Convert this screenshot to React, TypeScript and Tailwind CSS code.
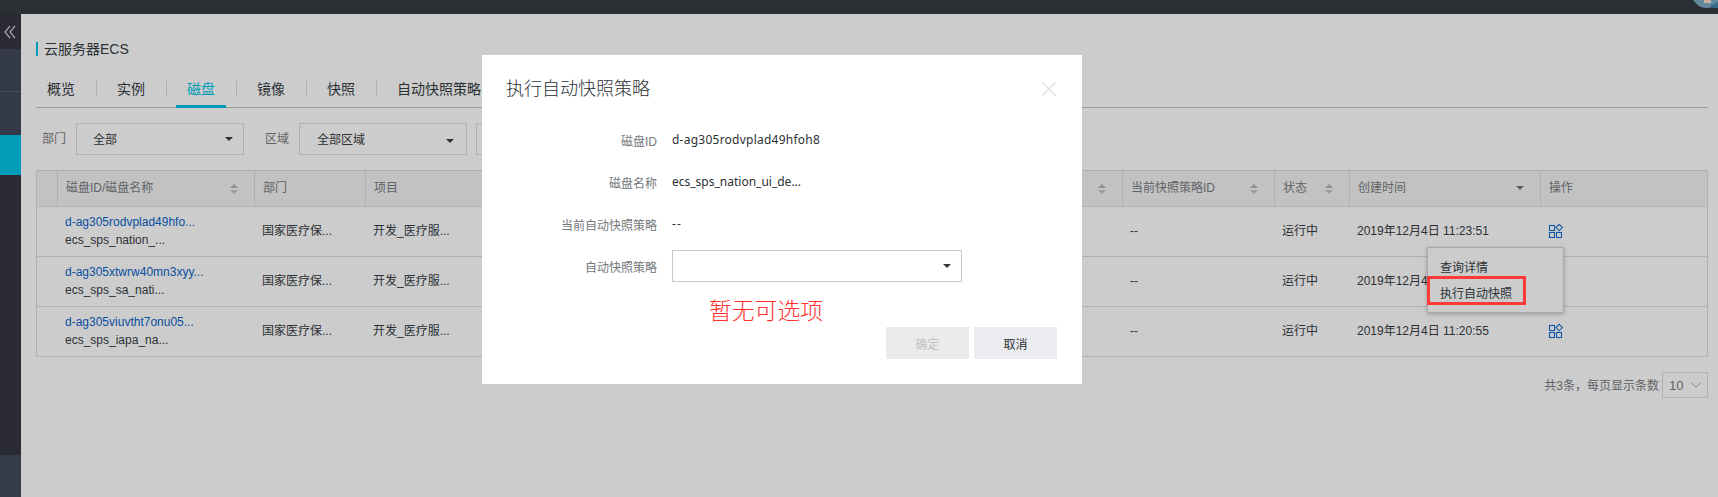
import React from "react";

const CARET = "h-0 w-0 border-x-4 border-t-4 border-x-transparent";
const COLS =
  "grid grid-cols-[21px_197px_111px_117px_640px_152px_75px_191px_1fr]";

const tabs = ["概览", "实例", "磁盘", "镜像", "快照", "自动快照策略"];

const headers: { label: string; sort?: "both" | "down" }[] = [
  { label: "" },
  { label: "磁盘ID/磁盘名称", sort: "both" },
  { label: "部门" },
  { label: "项目" },
  { label: "", sort: "both" },
  { label: "当前快照策略ID", sort: "both" },
  { label: "状态", sort: "both" },
  { label: "创建时间", sort: "down" },
  { label: "操作" },
];

const rows = [
  { id: "d-ag305rodvplad49hfo...", name: "ecs_sps_nation_...", time: "2019年12月4日 11:23:51" },
  { id: "d-ag305xtwrw40mn3xyy...", name: "ecs_sps_sa_nati...", time: "2019年12月4日 11:21:47" },
  { id: "d-ag305viuvtht7onu05...", name: "ecs_sps_iapa_na...", time: "2019年12月4日 11:20:55" },
];

function Sort({ kind }: { kind: "both" | "down" }) {
  if (kind === "down") return <span className={CARET + " mb-px mr-4 border-t-[#5b5e63]"} />;
  return (
    <span className="mr-4 flex flex-col gap-[2px]">
      <span className="h-0 w-0 border-x-4 border-b-4 border-x-transparent border-b-[#8f9194]" />
      <span className={CARET + " border-t-[#9b9da0]"} />
    </span>
  );
}

function GridIcon() {
  return (
    <svg width="16" height="16" viewBox="0 0 16 16" fill="none" stroke="#1459a8" strokeWidth="1.1">
      <rect x="1.5" y="2.5" width="5" height="5" />
      <rect x="1.5" y="9.5" width="5" height="5" />
      <rect x="8.5" y="9.5" width="5" height="5" />
      <path d="M11.2 1.4 14.4 4.6 11.2 7.8 8 4.6Z" />
    </svg>
  );
}

function Sidebar() {
  return (
    <aside className="flex w-[21px] shrink-0 flex-col bg-[#292a36]">
      <div className="flex h-[35px] items-center pl-1">
        <svg width="12" height="14" viewBox="0 0 12 14" fill="none" stroke="#a3a5ab" strokeWidth="1.2">
          <path d="M6 1 1 7l5 6M11 1 6 7l5 6" />
        </svg>
      </div>
      <div className="h-[43px] border-b border-[#484d5a] bg-[#343a48]" />
      <div className="h-[43px] bg-[#343a48]" />
      <div className="h-10 bg-[#009cb8]" />
      <div className="mt-auto h-[42px] bg-[#343b49]" />
    </aside>
  );
}

function Filter({ label, children }: { label: string; children: React.ReactNode }) {
  return (
    <div className="flex items-center gap-[10px]">
      <span className="text-[#5f6266]">{label}</span>
      <div className="flex h-8 w-[168px] items-center justify-between border border-[#b0b0b0]">{children}</div>
    </div>
  );
}

function DiskTable() {
  return (
    <div className="mt-[15px] w-[1672px] border border-b-0 border-[#b0b0b0]">
      <div className={COLS + " h-9 border-b border-[#b0b0b0] bg-[#c2c2c2] text-[#5f6266]"}>
        {headers.map((h, i) => (
          <div
            key={i}
            className={
              "flex items-center justify-between pl-2 " +
              (i === 3 || i === 8 ? "" : "border-r border-[#b0b0b0]")
            }
          >
            <span className="pb-px">{h.label}</span>
            {h.sort && <Sort kind={h.sort} />}
          </div>
        ))}
      </div>
      {rows.map((r) => (
        <div key={r.id} className={COLS + " h-[50px] items-center border-b border-[#b0b0b0] pb-[2px]"}>
          <span />
          <div className="pl-[7px] leading-[18px]">
            <div className="text-[#0a4fa0]">{r.id}</div>
            <div>{r.name}</div>
          </div>
          <span className="pl-[7px]">国家医疗保...</span>
          <span className="pl-[7px]">开发_医疗服...</span>
          <span />
          <span className="pl-[7px]">--</span>
          <span className="pl-[7px]">运行中</span>
          <span className="pl-[7px]">{r.time}</span>
          <span className="pl-[7px]">
            <GridIcon />
          </span>
        </div>
      ))}
    </div>
  );
}

function Field({ label, children }: { label: string; children?: React.ReactNode }) {
  return (
    <div className="flex h-[42px] items-center">
      <span className="w-[190px] pr-[15px] pt-[2px] text-right text-[#73777a]">{label}</span>
      {children}
    </div>
  );
}

const VALUE = "mb-[3px] font-['Noto_Sans','Noto_Sans_CJK_SC',sans-serif]";

function Modal() {
  return (
    <div className="absolute left-[482px] top-[55px] h-[329px] w-[600px] bg-white">
      <div className="flex h-[65px] items-center justify-between pl-6 pr-[26px] pt-[2px] text-[18px]">
        <h2 className="font-light">执行自动快照策略</h2>
        <svg width="14" height="14" viewBox="0 0 14 14" stroke="#e3e8eb" strokeWidth="1.6">
          <path d="M0 0 14 14M14 0 0 14" />
        </svg>
      </div>
      <div>
        <Field label="磁盘ID">
          <span className={VALUE + " tracking-[0.24px]"}>d-ag305rodvplad49hfoh8</span>
        </Field>
        <Field label="磁盘名称">
          <span className={VALUE}>ecs_sps_nation_ui_de...</span>
        </Field>
        <Field label="当前自动快照策略">
          <span className={VALUE + " tracking-[1.2px]"}>--</span>
        </Field>
        <Field label="自动快照策略">
          <div className="mb-[2px] flex h-8 w-[290px] items-center justify-end border border-[#c8c8c8] pr-[10px]">
            <span className={CARET + " border-t-[#33383c]"} />
          </div>
        </Field>
      </div>
      <p className="ml-[227px] mt-[7px] h-[32px] text-[22.8px] font-light leading-[32px] text-[#ff3030]">
        暂无可选项
      </p>
      <div className="flex justify-end gap-[5px] pr-[25px]">
        <button className="h-8 w-[83px] bg-[#ebebeb] pt-[3px] text-[#c1c1c1]">确定</button>
        <button className="h-8 w-[83px] bg-[#ebecf0] pt-[3px]">取消</button>
      </div>
    </div>
  );
}

function ActionMenu() {
  return (
    <div className="absolute left-[1427px] top-[247px] h-[66px] w-[137px] border border-[#aaaaaa] bg-[#cccccc] pt-[7px] shadow-[0_1px_4px_rgba(0,0,0,0.25)]">
      <div className="flex h-[26px] items-center pl-3">查询详情</div>
      <div className="flex h-[26px] items-center pl-3">执行自动快照</div>
      <div className="absolute -left-px top-[28px] h-[29px] w-[99px] border-[3px] border-[#ff3838]" />
    </div>
  );
}

export default function App() {
  return (
    <div className="relative flex h-[497px] w-[1718px] flex-col overflow-hidden bg-[#cccccc] font-['Liberation_Sans','Noto_Sans_CJK_SC',sans-serif] text-[12px] leading-[18px] text-[#2b3034]">
      <header className="relative h-[14px] shrink-0 overflow-hidden bg-[#2b3034]">
        <svg className="absolute right-0 top-0" width="26" height="8" viewBox="0 0 26 8">
          <circle cx="15" cy="-7.5" r="15.5" fill="#63879b" />
          <path d="M14 8 26 2v6Z" fill="#356a8b" clipPath="circle(15.5px at 15px -7.5px)" />
          <path d="M12 0h7v3h-7Z" fill="#c9aea1" />
        </svg>
      </header>
      <div className="flex min-h-0 flex-1">
        <Sidebar />
        <main className="flex min-w-0 flex-1 flex-col pl-[15px]">
          <div className="mt-[28px] flex h-[14px] items-center gap-[6px] text-[14px]">
            <span className="h-[14px] w-[2px] bg-[#009cb8]" />
            <h1>云服务器ECS</h1>
          </div>
          <nav className="mt-[15px] flex h-[37px] w-[1672px] border-b border-[#9c9c9c] text-[14px]">
            {tabs.map((t, i) => (
              <div key={t} className="flex">
                {i > 0 && <span className="ml-[10px] mr-[9px] mt-[10px] h-4 w-px bg-[#b0b0b0]" />}
                <span
                  className={
                    "flex h-[37px] items-center px-[11px] " +
                    (t === "磁盘" ? "border-b-[3px] border-[#009cb8] pt-px text-[#009cb8]" : "pb-[2px]")
                  }
                >
                  {t}
                </span>
              </div>
            ))}
          </nav>
          <div className="mt-[15px] flex items-center gap-[21px] pl-[6px]">
            <Filter label="部门">
              <span className="pl-4 pt-[2px]">全部</span>
              <span className={CARET + " mr-[10px] border-t-[#2b3034]"} />
            </Filter>
            <Filter label="区域">
              <span className="pl-[17px] pt-[2px]">全部区域</span>
              <span className={CARET + " mr-3 mt-[3px] border-t-[#2b3034]"} />
            </Filter>
            <div className="-ml-3 h-8 w-[168px] border border-[#b0b0b0]" />
          </div>
          <DiskTable />
          <div className="mt-[15px] flex w-[1672px] items-center justify-end gap-[3px] text-[#5f6266]">
            <span className="pt-[2px]">共3条，每页显示条数</span>
            <div className="flex h-[26px] w-[46px] items-center justify-between border border-[#b0b0b0] px-[6px] text-[13px]">
              <span className="pt-px">10</span>
              <svg width="10" height="6" viewBox="0 0 10 6" fill="none" stroke="#85888b">
                <path d="M0 .5 5 5.2 10 .5" />
              </svg>
            </div>
          </div>
        </main>
      </div>
      <ActionMenu />
      <Modal />
    </div>
  );
}
